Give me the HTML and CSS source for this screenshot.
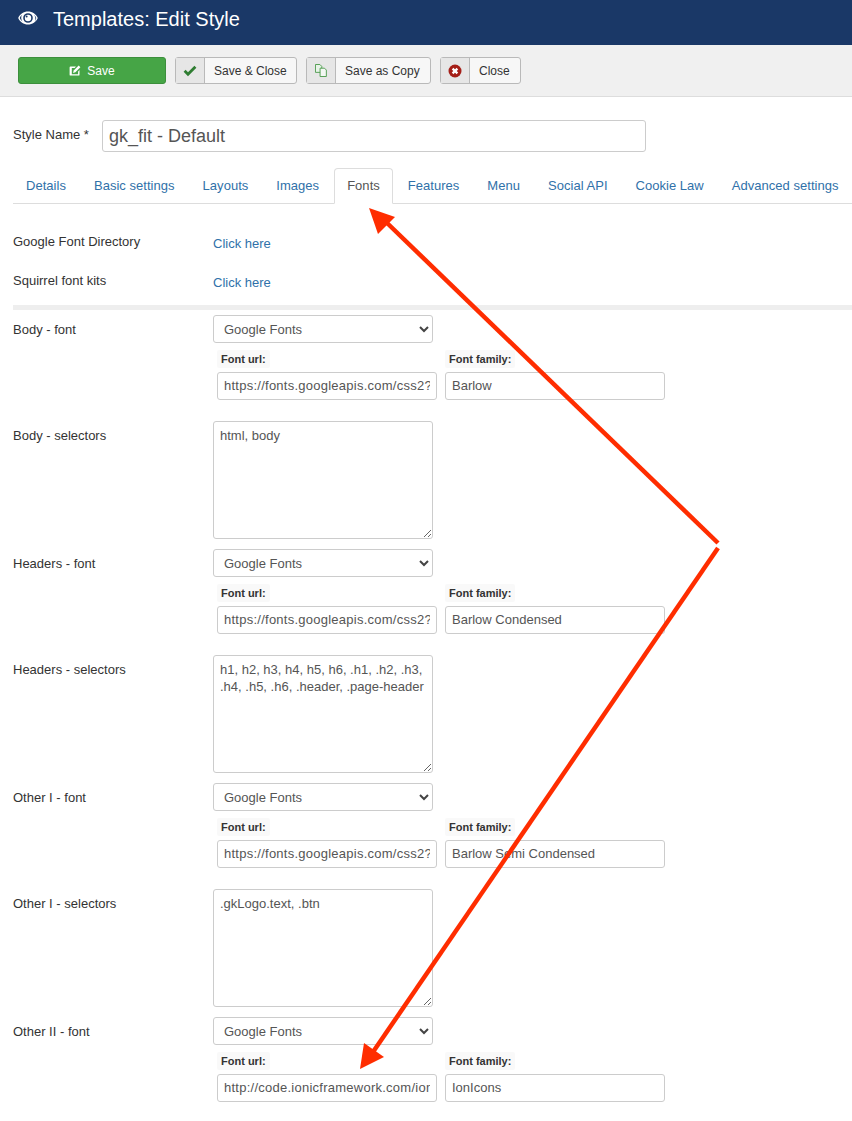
FILE: index.html
```html
<!DOCTYPE html>
<html lang="en">
<head>
<meta charset="utf-8">
<title>Templates: Edit Style</title>
<link rel="stylesheet" href="styles.css">
</head>
<body>
<header class="title-bar">
  <svg class="eye" viewBox="0 0 20 14" width="20" height="14"><path fill="#fff" fill-rule="evenodd" d="M10 .5C5.600.5 2 3 .2 7 2 11 5.600 13.500 10 13.500S18 11 19.800 7C18 3 14.400.5 10 .5zM10 2.200a4.800 4.800 0 1 1 0 9.600 4.800 4.800 0 0 1 0-9.600zM3.900 3.700a8.800 8.800 0 0 0-2.200 3.300 9 9 0 0 0 2.800 3.500A6.800 6.800 0 0 1 3.900 3.700zM16.100 3.700a6.800 6.800 0 0 1 .6 6.800 9 9 0 0 0 1.600-3.500 8.800 8.800 0 0 0-2.200-3.300z"/><circle cx="10" cy="7" r="3.200" fill="#fff"/><circle cx="8.600" cy="5.500" r="1" fill="#1a3867"/></svg>
  <h1 class="title">Templates: Edit Style</h1>
</header>
<div class="toolbar">
  <button class="btn-save" type="button">
    <svg viewBox="0 0 12 12" width="12" height="12"><path fill="#fff" d="M1.500 1.500H7L5.600 2.900H2.800v6.300h6.300V6.500L10.500 5v4.700a.9.900 0 0 1-.9.900H1.500a.9.900 0 0 1-.9-.9V2.400a.9.900 0 0 1 .9-.9z"/><path fill="#fff" d="M9.700.6l1.700 1.700-5 5-2.300.6.600-2.300z"/></svg>
    Save
  </button>
  <button class="btn btn-keep" type="button">
    <span class="btn-icon"><svg viewBox="0 0 14 12" width="14" height="12"><path fill="#2f7d32" d="M5 11.200L.6 6.800l2-2L5 7.200 11.400.8l2 2z"/></svg></span>
    <span class="btn-text">Save &amp; Close</span>
  </button>
  <button class="btn btn-copy" type="button">
    <span class="btn-icon"><svg viewBox="0 0 13 14" width="12" height="13"><path fill="#e8f3e8" stroke="#4c9a4c" d="M.5.500h4.800l2 2v6.500H.5z"/><path fill="#f3f8f3" stroke="#4c9a4c" d="M5.500 4.500h4.800l2 2v7h-6.800z"/></svg></span>
    <span class="btn-text">Save as Copy</span>
  </button>
  <button class="btn btn-close" type="button">
    <span class="btn-icon"><svg viewBox="0 0 14 14" width="14" height="14"><circle cx="7" cy="7" r="6.500" fill="#a51f18"/><path stroke="#fff" stroke-width="2.300" d="M4.600 4.600l4.800 4.800M9.400 4.600l-4.800 4.800"/></svg></span>
    <span class="btn-text">Close</span>
  </button>
</div>
<main class="content">
  <div class="name-row">
    <label class="name-label">Style Name *</label>
    <input class="name-input" type="text" value="gk_fit - Default">
  </div>
  <nav class="tabs">
    <a class="tab">Details</a>
    <a class="tab">Basic settings</a>
    <a class="tab">Layouts</a>
    <a class="tab">Images</a>
    <a class="tab active">Fonts</a>
    <a class="tab">Features</a>
    <a class="tab">Menu</a>
    <a class="tab">Social API</a>
    <a class="tab">Cookie Law</a>
    <a class="tab">Advanced settings</a>
  </nav>
  <section class="panel">
    <div class="row link-row"><label class="row-label">Google Font Directory</label><a class="link">Click here</a></div>
    <div class="row link-row last"><label class="row-label">Squirrel font kits</label><a class="link">Click here</a></div>
    <hr class="divider">

    <div class="row font-row"><label class="row-label">Body - font</label>
      <div>
        <div class="select-wrap"><select class="select"><option>Google Fonts</option></select><svg class="chev" viewBox="0 0 10 7" width="10" height="7"><path d="M1 1l4 4 4-4" fill="none" stroke="#444" stroke-width="2"/></svg></div>
        <div class="sub">
          <div class="sub-field"><span class="sub-label">Font url:</span><input class="input url" type="text" value="https://fonts.googleapis.com/css2?family=Barlow"></div>
          <div class="sub-field"><span class="sub-label">Font family:</span><input class="input" type="text" value="Barlow"></div>
        </div>
      </div>
    </div>
    <div class="row area-row"><label class="row-label">Body - selectors</label><textarea class="area">html, body</textarea></div>

    <div class="row font-row"><label class="row-label">Headers - font</label>
      <div>
        <div class="select-wrap"><select class="select"><option>Google Fonts</option></select><svg class="chev" viewBox="0 0 10 7" width="10" height="7"><path d="M1 1l4 4 4-4" fill="none" stroke="#444" stroke-width="2"/></svg></div>
        <div class="sub">
          <div class="sub-field"><span class="sub-label">Font url:</span><input class="input url" type="text" value="https://fonts.googleapis.com/css2?family=Barlow"></div>
          <div class="sub-field"><span class="sub-label">Font family:</span><input class="input" type="text" value="Barlow Condensed"></div>
        </div>
      </div>
    </div>
    <div class="row area-row"><label class="row-label">Headers - selectors</label><textarea class="area">h1, h2, h3, h4, h5, h6, .h1, .h2, .h3, .h4, .h5, .h6, .header, .page-header</textarea></div>

    <div class="row font-row"><label class="row-label">Other I - font</label>
      <div>
        <div class="select-wrap"><select class="select"><option>Google Fonts</option></select><svg class="chev" viewBox="0 0 10 7" width="10" height="7"><path d="M1 1l4 4 4-4" fill="none" stroke="#444" stroke-width="2"/></svg></div>
        <div class="sub">
          <div class="sub-field"><span class="sub-label">Font url:</span><input class="input url" type="text" value="https://fonts.googleapis.com/css2?family=Barlow"></div>
          <div class="sub-field"><span class="sub-label">Font family:</span><input class="input" type="text" value="Barlow Semi Condensed"></div>
        </div>
      </div>
    </div>
    <div class="row area-row"><label class="row-label">Other I - selectors</label><textarea class="area">.gkLogo.text, .btn</textarea></div>

    <div class="row font-row"><label class="row-label">Other II - font</label>
      <div>
        <div class="select-wrap"><select class="select"><option>Google Fonts</option></select><svg class="chev" viewBox="0 0 10 7" width="10" height="7"><path d="M1 1l4 4 4-4" fill="none" stroke="#444" stroke-width="2"/></svg></div>
        <div class="sub">
          <div class="sub-field"><span class="sub-label">Font url:</span><input class="input url" type="text" value="http://code.ionicframework.com/ionicons"></div>
          <div class="sub-field"><span class="sub-label">Font family:</span><input class="input" type="text" value="IonIcons"></div>
        </div>
      </div>
    </div>
  </section>
</main>
<svg class="arrows" viewBox="0 0 852 1121" width="852" height="1121">
  <path d="M718 543L385 221" fill="none" stroke="#ff2d00" stroke-width="4.500"/>
  <path d="M369 208L395 217L378 234z" fill="#ff2d00"/>
  <path d="M718 548L373 1052" fill="none" stroke="#ff2d00" stroke-width="4.500"/>
  <path d="M360 1069L364 1043L384 1057z" fill="#ff2d00"/>
</svg>
</body>
</html>
```
FILE: styles.css
```css
* { box-sizing: border-box; }
html, body { margin: 0; padding: 0; }
body {
  position: relative;
  width: 852px;
  height: 1121px;
  overflow: hidden;
  background: #fff;
  color: #333;
  font-family: "Liberation Sans", Arial, sans-serif;
  font-size: 13px;
}
.title-bar {
  display: flex;
  align-items: center;
  height: 45px;
  padding: 0 0 8px 18px;
  background: #1a3867;
}
.eye { flex: none; margin-top: -2px; }
.title {
  margin: 0 0 0 15px;
  color: #fff;
  font-size: 20px;
  font-weight: 400;
  line-height: 24px;
}
.toolbar {
  display: flex;
  gap: 9px;
  height: 52px;
  padding: 12px 0 0 18px;
  background: #f0f0f0;
  border-bottom: 1px solid #ddd;
}
.btn-save, .btn {
  height: 27px;
  padding: 0;
  border-radius: 3px;
  font-family: inherit;
  font-size: 12px;
}
.btn-save {
  display: flex;
  align-items: center;
  justify-content: center;
  gap: 6px;
  width: 148px;
  background: #46a546;
  border: 1px solid #3c8f3c;
  color: #fff;
}
.btn {
  display: flex;
  background: #f7f7f7;
  border: 1px solid #b9b9b9;
  color: #333;
}
.btn-keep { width: 122px; }
.btn-copy { width: 125px; }
.btn-close { width: 81px; }
.btn-icon {
  display: flex;
  flex: none;
  align-items: center;
  justify-content: center;
  width: 29px;
  height: 100%;
  background: #e6e6e6;
  border-right: 1px solid #b9b9b9;
}
.btn-text {
  align-self: center;
  padding-left: 9px;
  white-space: nowrap;
}
.content { padding-left: 13px; }
.name-row {
  display: flex;
  align-items: center;
  padding-top: 23px;
}
.name-label { width: 89px; margin-top: -4px; }
.name-input {
  width: 544px;
  height: 32px;
  padding: 0 6px;
  border: 1px solid #ccc;
  border-radius: 3px;
  color: #555;
  font-family: inherit;
  font-size: 18px;
}
.tabs {
  display: flex;
  height: 36px;
  margin-top: 16px;
  border-bottom: 1px solid #ddd;
}
.tab {
  flex: none;
  height: 36px;
  margin-right: 2px;
  padding: 0 12px;
  border: 1px solid transparent;
  border-radius: 4px 4px 0 0;
  color: #3071a9;
  letter-spacing: .03px;
  line-height: 33px;
  white-space: nowrap;
}
.tab.active {
  background: #fff;
  border-color: #ddd #ddd #fff;
  color: #555;
}
.panel { padding-top: 28px; }
.row {
  display: grid;
  grid-template-columns: 200px 1fr;
}
.row-label { line-height: 18px; }
.link-row { height: 20px; margin-bottom: 19px; }
.link-row .row-label { padding-top: 1px; }
.link-row.last { margin-bottom: 14px; }
.link { padding-top: 3px; color: #3071a9; line-height: 18px; }
.divider {
  height: 5px;
  margin: 0 0 5px;
  border: 0;
  background: #eee;
}
.font-row { margin-bottom: 21px; }
.font-row .row-label, .area-row .row-label { padding-top: 6px; }
.select-wrap { position: relative; width: 220px; }
.select {
  display: block;
  width: 220px;
  height: 28px;
  padding: 0 10px;
  appearance: none;
  background: #fff;
  border: 1px solid #ccc;
  border-radius: 3px;
  color: #555;
  font-family: inherit;
  font-size: 13px;
}
.chev { position: absolute; top: 11px; right: 4px; }
.sub {
  display: flex;
  gap: 8px;
  margin: 7px 0 0 4px;
}
.sub-field { width: 220px; }
.sub-label {
  display: block;
  width: fit-content;
  height: 18px;
  margin-bottom: 4px;
  padding: 0 4px;
  background: #f9f9f9;
  border-radius: 2px;
  color: #333;
  font-size: 11px;
  font-weight: 700;
  line-height: 18px;
}
.input {
  display: block;
  width: 220px;
  height: 28px;
  padding: 0 6px 2px;
  border: 1px solid #ccc;
  border-radius: 3px;
  color: #555;
  font-family: inherit;
  font-size: 13px;
}
.input.url { letter-spacing: .25px; }
.area-row { margin-bottom: 10px; }
.area {
  display: block;
  width: 220px;
  height: 118px;
  padding: 5px 6px;
  border: 1px solid #ccc;
  border-radius: 3px;
  color: #555;
  font-family: inherit;
  font-size: 13px;
  line-height: 17px;
}
.arrows {
  position: absolute;
  top: 0;
  left: 0;
  pointer-events: none;
}
```
